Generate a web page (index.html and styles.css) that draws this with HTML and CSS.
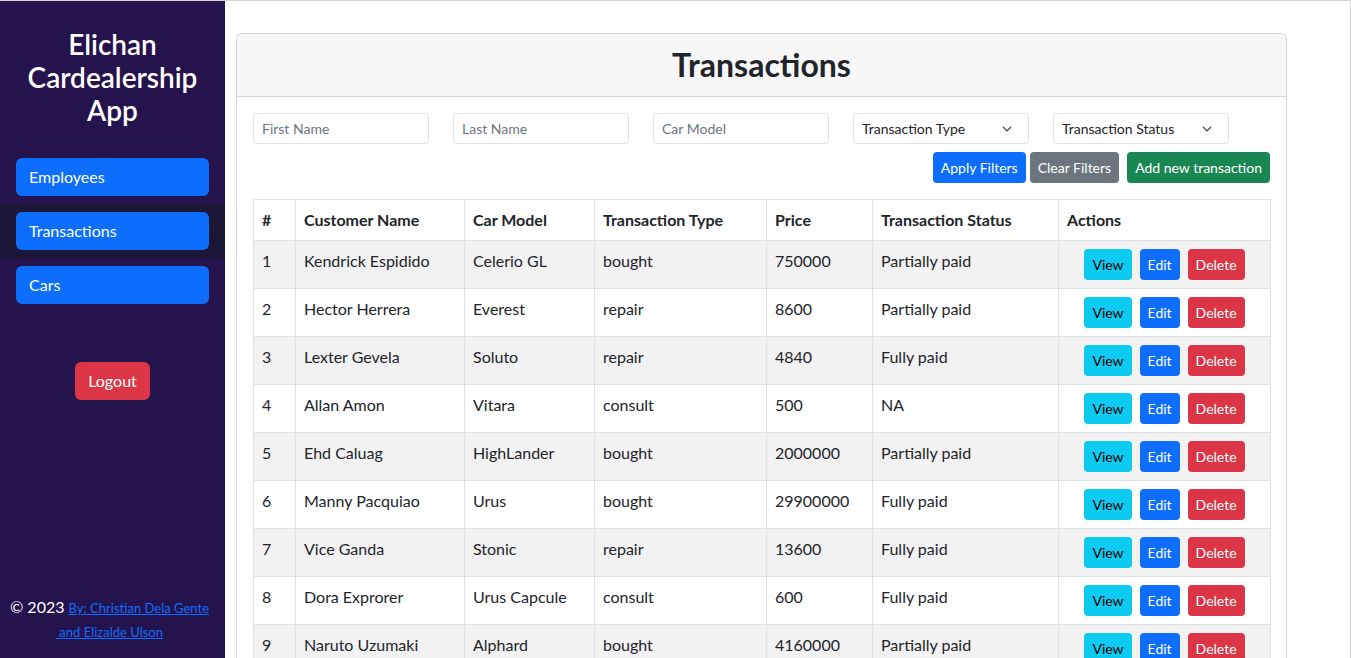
FILE: index.html
```html
<!DOCTYPE html>
<html lang="en">
<head>
<meta charset="utf-8">
<title>Transactions</title>
<link rel="stylesheet" href="styles.css">
</head>
<body>
<div class="app">
  <aside class="sidebar">
    <h2 class="brand">Elichan Cardealership App</h2>
    <nav class="nav">
      <div class="nav-row"><a class="nav-btn" href="#">Employees</a></div>
      <div class="nav-row active"><a class="nav-btn" href="#">Transactions</a></div>
      <div class="nav-row"><a class="nav-btn" href="#">Cars</a></div>
    </nav>
    <div class="logout-wrap"><button class="btn btn-danger btn-logout">Logout</button></div>
    <footer class="footer">
      <div class="footer-line">© 2023 <a href="#">By: Christian Dela Gente</a></div>
      <div class="footer-line"><a href="#">&nbsp;and Elizalde Ulson</a></div>
    </footer>
  </aside>
  <main class="main">
    <section class="card">
      <header class="card-header"><h1>Transactions</h1></header>
      <div class="card-body">
        <div class="filters">
          <input class="control" placeholder="First Name">
          <input class="control" placeholder="Last Name">
          <input class="control" placeholder="Car Model">
          <select class="control select"><option>Transaction Type</option></select>
          <select class="control select"><option>Transaction Status</option></select>
        </div>
        <div class="toolbar">
          <button class="btn btn-primary">Apply Filters</button>
          <button class="btn btn-secondary">Clear Filters</button>
          <button class="btn btn-success add">Add new transaction</button>
        </div>
        <table class="table">
          <colgroup>
            <col class="c1"><col class="c2"><col class="c3"><col class="c4"><col class="c5"><col class="c6"><col class="c7">
          </colgroup>
          <thead>
            <tr><th>#</th><th>Customer Name</th><th>Car Model</th><th>Transaction Type</th><th>Price</th><th>Transaction Status</th><th>Actions</th></tr>
          </thead>
          <tbody>
            <tr><td>1</td><td>Kendrick Espidido</td><td>Celerio GL</td><td>bought</td><td>750000</td><td>Partially paid</td><td class="actions"><button class="btn btn-info">View</button><button class="btn btn-primary">Edit</button><button class="btn btn-danger">Delete</button></td></tr>
            <tr><td>2</td><td>Hector Herrera</td><td>Everest</td><td>repair</td><td>8600</td><td>Partially paid</td><td class="actions"><button class="btn btn-info">View</button><button class="btn btn-primary">Edit</button><button class="btn btn-danger">Delete</button></td></tr>
            <tr><td>3</td><td>Lexter Gevela</td><td>Soluto</td><td>repair</td><td>4840</td><td>Fully paid</td><td class="actions"><button class="btn btn-info">View</button><button class="btn btn-primary">Edit</button><button class="btn btn-danger">Delete</button></td></tr>
            <tr><td>4</td><td>Allan Amon</td><td>Vitara</td><td>consult</td><td>500</td><td>NA</td><td class="actions"><button class="btn btn-info">View</button><button class="btn btn-primary">Edit</button><button class="btn btn-danger">Delete</button></td></tr>
            <tr><td>5</td><td>Ehd Caluag</td><td>HighLander</td><td>bought</td><td>2000000</td><td>Partially paid</td><td class="actions"><button class="btn btn-info">View</button><button class="btn btn-primary">Edit</button><button class="btn btn-danger">Delete</button></td></tr>
            <tr><td>6</td><td>Manny Pacquiao</td><td>Urus</td><td>bought</td><td>29900000</td><td>Fully paid</td><td class="actions"><button class="btn btn-info">View</button><button class="btn btn-primary">Edit</button><button class="btn btn-danger">Delete</button></td></tr>
            <tr><td>7</td><td>Vice Ganda</td><td>Stonic</td><td>repair</td><td>13600</td><td>Fully paid</td><td class="actions"><button class="btn btn-info">View</button><button class="btn btn-primary">Edit</button><button class="btn btn-danger">Delete</button></td></tr>
            <tr><td>8</td><td>Dora Exprorer</td><td>Urus Capcule</td><td>consult</td><td>600</td><td>Fully paid</td><td class="actions"><button class="btn btn-info">View</button><button class="btn btn-primary">Edit</button><button class="btn btn-danger">Delete</button></td></tr>
            <tr><td>9</td><td>Naruto Uzumaki</td><td>Alphard</td><td>bought</td><td>4160000</td><td>Partially paid</td><td class="actions"><button class="btn btn-info">View</button><button class="btn btn-primary">Edit</button><button class="btn btn-danger">Delete</button></td></tr>
          </tbody>
        </table>
      </div>
    </section>
  </main>
</div>
</body>
</html>
```
FILE: styles.css
```css
* { box-sizing: border-box; }
html, body { margin: 0; padding: 0; height: 100%; overflow: hidden; }
body {
  font-family: Lato, "Open Sans", sans-serif;
  font-size: 16px;
  line-height: 1.5;
  color: #212529;
  background: #fff;
  border-top: 1px solid #d4d4d4;
  border-right: 1px solid #d4d4d4;
}
.app { display: flex; height: 657px; }

.btn {
  border: 1px solid transparent;
  border-radius: 4px;
  font-family: inherit;
  font-size: 14px;
  line-height: 21px;
  padding: 4px 8px;
  color: #fff;
  cursor: pointer;
}
.btn-primary { background: #0d6efd; }
.btn-secondary { background: #6c757d; }
.btn-success { background: #198754; }
.btn-danger { background: #dc3545; }
.btn-info { background: #0dcaf0; color: #000; }

.sidebar {
  width: 225px;
  flex: none;
  background: #24134d;
  display: flex;
  flex-direction: column;
  color: #fff;
}
.brand {
  margin: 27px 0 0;
  font-size: 28px;
  font-weight: 600;
  line-height: 33px;
  text-align: center;
  padding: 0 10px;
}
.nav { margin-top: 23px; display: flex; flex-direction: column; }
.nav-row { padding: 8px 16px; }
.nav-row.active { background: #1c1637; }
.nav-btn {
  display: block;
  height: 38px;
  line-height: 38px;
  padding: 0 13px;
  background: #0d6efd;
  color: #fff;
  text-decoration: none;
  border-radius: 6px;
  font-size: 16px;
}
.logout-wrap { margin-top: 50px; display: flex; justify-content: center; }
.btn.btn-logout {
  font-size: 16px;
  line-height: 24px;
  padding: 6px 12px;
  height: 38px;
  width: 75px;
  border-radius: 6px;
}
.footer {
  margin-top: auto;
  padding: 0 12px 15px 6px;
  text-align: center;
  font-size: 16px;
  line-height: 24px;
}
.footer-line { height: 24px; }
.footer a { color: #0d6efd; font-size: 13px; line-height: 24px; }

.main { flex: 1; padding: 32px 0 0 11px; }
.card {
  width: 1051px;
  border: 1px solid #d6d6d6;
  border-bottom: none;
  border-radius: 6px 6px 0 0;
  background: #fff;
  height: 640px;
}
.card-header {
  background: #f7f7f7;
  border-bottom: 1px solid #d6d6d6;
  padding: 12px 16px;
  border-radius: 6px 6px 0 0;
}
.card-header h1 {
  margin: 0;
  text-align: center;
  font-size: 32px;
  line-height: 38px;
  font-weight: 700;
}
.card-body { padding: 16px; }
.filters { display: flex; gap: 24px; }
.control {
  width: 176px;
  height: 31px;
  border: 1px solid #dee2e6;
  border-radius: 4px;
  padding: 4px 8px;
  font-family: inherit;
  font-size: 14px;
  color: #212529;
  background: #fff;
}
.control::placeholder { color: #6c757d; }
.select {
  appearance: none;
  -webkit-appearance: none;
  background-image: url("data:image/svg+xml,%3csvg xmlns='http://www.w3.org/2000/svg' viewBox='0 0 16 16'%3e%3cpath fill='none' stroke='%23343a40' stroke-linecap='round' stroke-linejoin='round' stroke-width='2' d='m2 5 6 6 6-6'/%3e%3c/svg%3e");
  background-repeat: no-repeat;
  background-position: right 14px center;
  background-size: 14px 10px;
}
.toolbar { display: flex; justify-content: flex-end; gap: 4px; margin-top: 8px; }
.toolbar .add { margin-left: 4px; }
.toolbar .btn { padding: 4px 7px; }

.table {
  margin-top: 16px;
  width: 1017px;
  border-collapse: collapse;
  table-layout: fixed;
}
.c1 { width: 42px; } .c2 { width: 169px; } .c3 { width: 130px; } .c4 { width: 172px; }
.c5 { width: 106px; } .c6 { width: 186px; } .c7 { width: 212px; }
.table th, .table td {
  border: 1px solid #dee2e6;
  padding: 8px;
  text-align: left;
  vertical-align: top;
  white-space: nowrap;
}
.table th { font-weight: 700; }
.table tbody tr:nth-child(odd) td { background: #f2f2f2; }
.table td.actions { text-align: center; }
.actions .btn { padding: 4px 7px; }
.actions .btn + .btn { margin-left: 8px; }
```
